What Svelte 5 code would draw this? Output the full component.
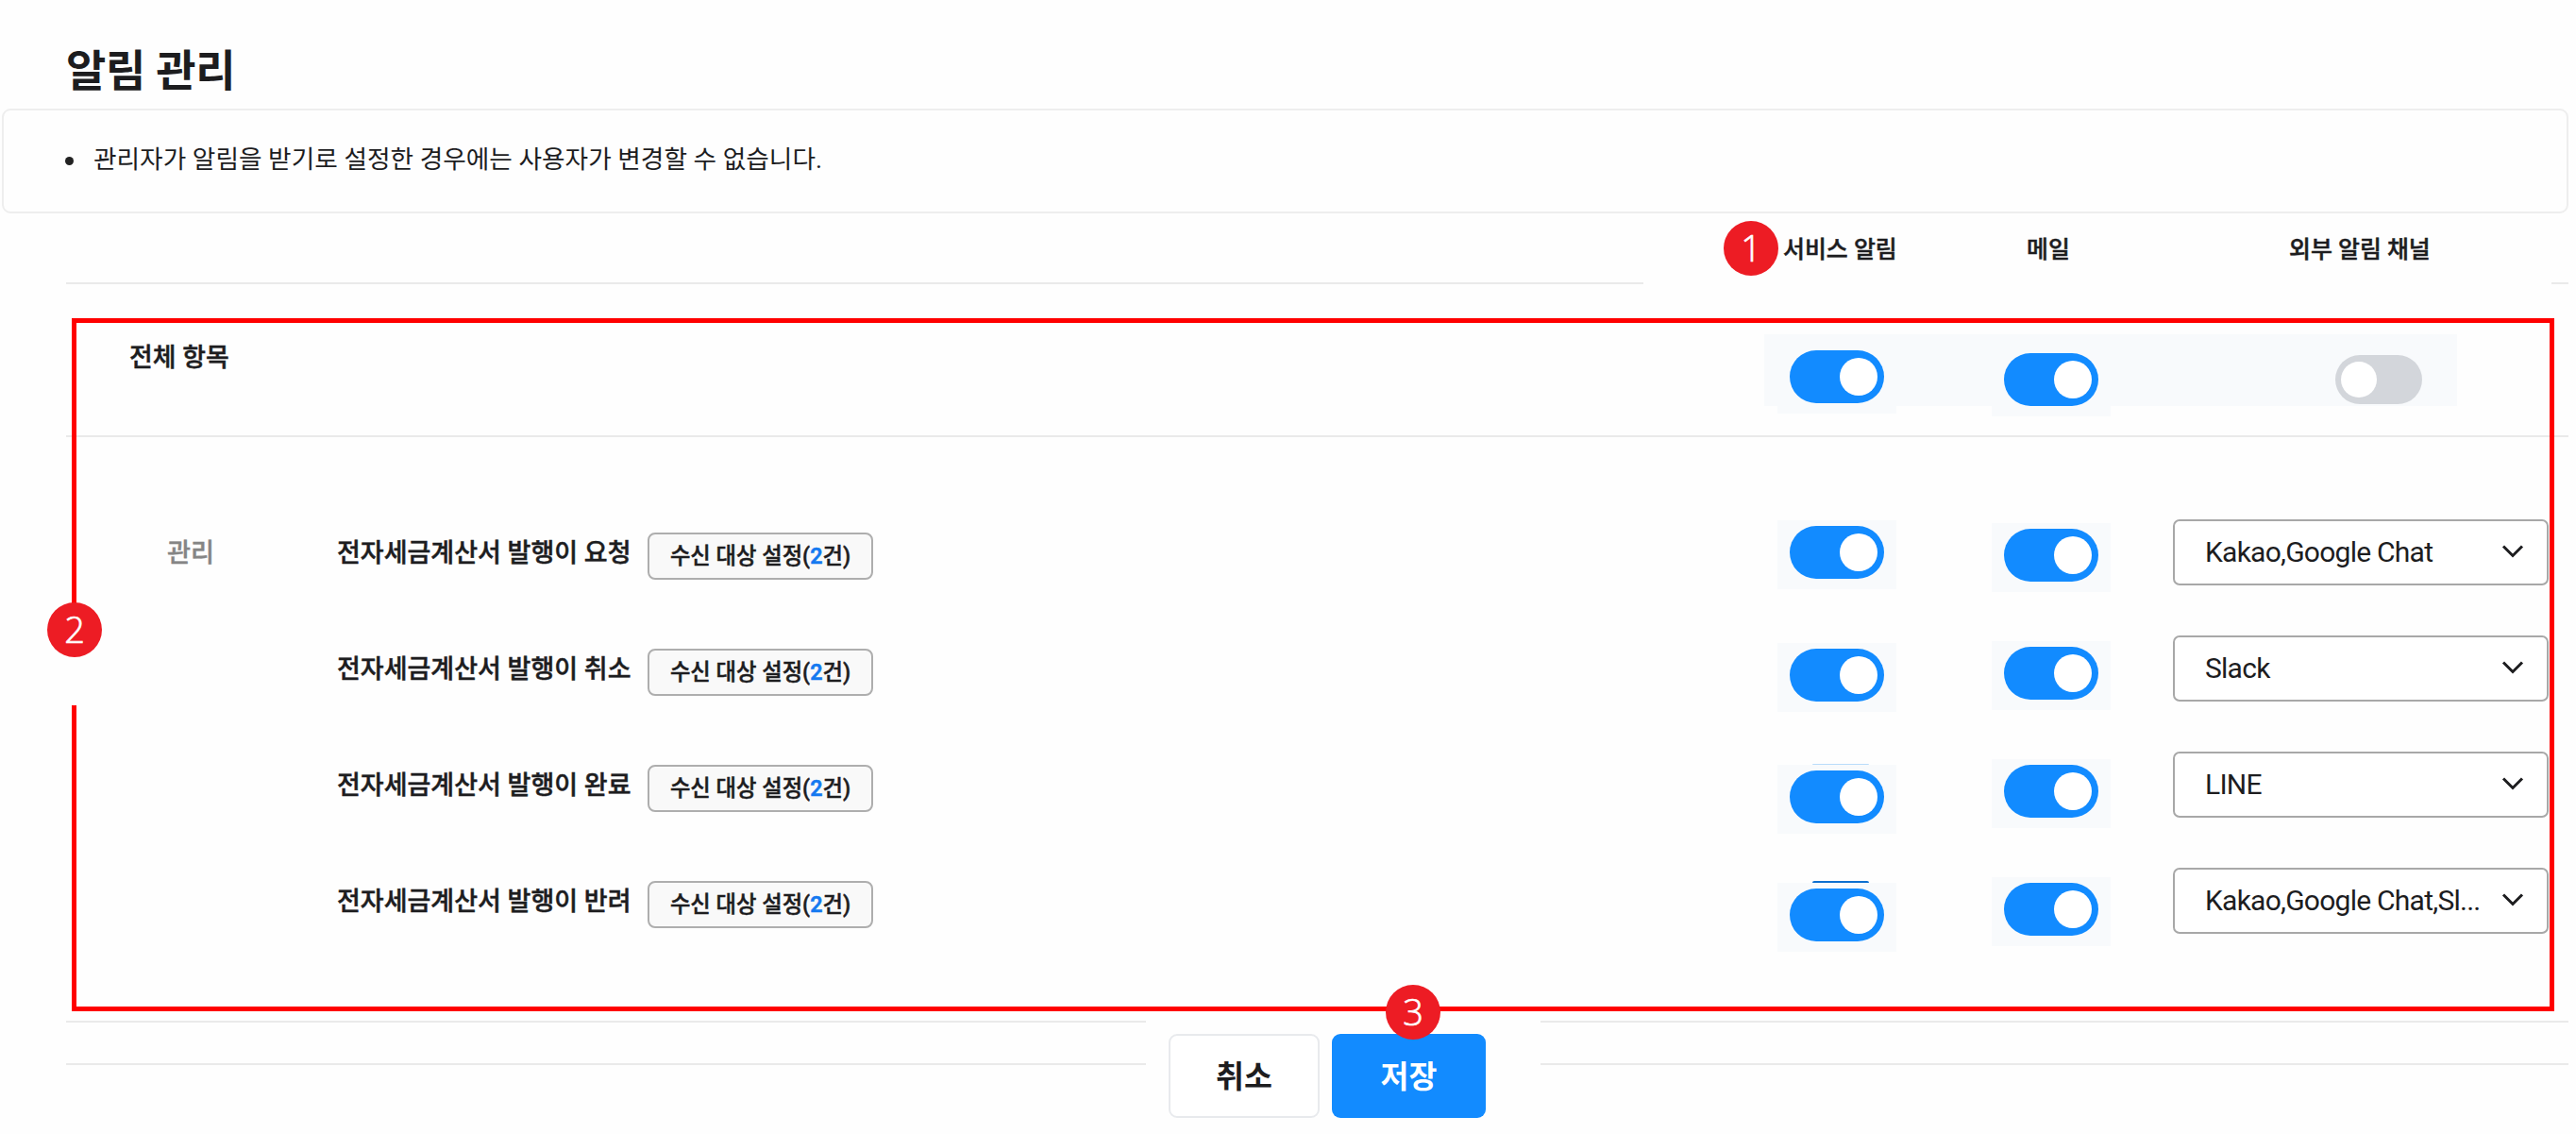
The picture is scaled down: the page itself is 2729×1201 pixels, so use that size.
<script>
  const rows = [
    { name: '전자세금계산서 발행이 요청', count: 2, channel: 'Kakao,Google Chat' },
    { name: '전자세금계산서 발행이 취소', count: 2, channel: 'Slack' },
    { name: '전자세금계산서 발행이 완료', count: 2, channel: 'LINE' },
    { name: '전자세금계산서 발행이 반려', count: 2, channel: 'Kakao,Google Chat,Sl...' }
  ];
</script>

{#snippet toggle()}
  <span class="tile"><button class="toggle" aria-label="알림 켜기"><i></i></button></span>
{/snippet}

<main>
  <h1>알림 관리</h1>
  <section class="notice"><ul><li>관리자가 알림을 받기로 설정한 경우에는 사용자가 변경할 수 없습니다.</li></ul></section>

  <header class="heads">
    <span class="h-service">서비스 알림</span>
    <span class="h-mail">메일</span>
    <span class="h-channel">외부 알림 채널</span>
  </header>
  <div class="split top"><hr /><hr /></div>

  <section class="all">
    <strong>전체 항목</strong>
    <div class="all-toggles">
      {@render toggle()}
      {@render toggle()}
      <button class="toggle off" aria-label="외부 알림 켜기"><i></i></button>
    </div>
  </section>
  <hr class="rule" />

  <section class="body">
    <div class="category">관리</div>
    <div class="items">
      {#each rows as row}
        <div class="item">
          <span class="name">{row.name}</span>
          <button class="target">수신 대상 설정(<b>{row.count}</b>건)</button>
        </div>
      {/each}
    </div>
    <div class="toggles service">
      {#each rows as _}{@render toggle()}{/each}
    </div>
    <div class="toggles mail">
      {#each rows as _}{@render toggle()}{/each}
    </div>
    <div class="selects">
      {#each rows as row}
        <div class="select">
          <span>{row.channel}</span>
          <svg viewBox="0 0 24 16" width="24" height="16"><path d="M2 2.5 12 12.5 22 2.5" /></svg>
        </div>
      {/each}
    </div>
  </section>

  <div class="split low"><hr /><hr /></div>
  <footer>
    <hr />
    <div class="actions">
      <button class="cancel">취소</button>
      <button class="save">저장</button>
    </div>
    <hr />
  </footer>

  <div class="frame"></div>
  <div class="frame-gap"></div>
  <span class="badge one">1</span>
  <span class="badge two">2</span>
  <span class="badge three">3</span>
</main>

<style>
  :global(body) { background: #fff; }
  main {
    position: relative;
    width: 2729px;
    height: 1201px;
    overflow: hidden;
    box-sizing: border-box;
    font-family: Roboto, 'Noto Sans CJK KR', sans-serif;
    color: #1d1d1f;
    background: #fefefe;
  }
  * { box-sizing: border-box; }
  button { font: inherit; color: inherit; padding: 0; border: 0; }
  hr { margin: 0; border: 0; height: 2px; background: #eaeaea; }

  h1 {
    margin: 0;
    padding: 40px 0 0 70px;
    height: 115px;
    font-size: 46px;
    line-height: 70px;
    font-weight: 700;
    letter-spacing: -0.3px;
  }
  .notice {
    width: 2719px;
    height: 111px;
    margin-left: 2px;
    padding: 33px 0 0 65px;
    border: 2px solid #eee;
    border-radius: 9px;
  }
  ul { margin: 0; padding: 0; list-style: none; }
  li {
    display: flex;
    align-items: center;
    gap: 21px;
    font-size: 26.7px;
    line-height: 38px;
  }
  li::before { content: ''; width: 9px; height: 9px; margin-top: 2px; border-radius: 50%; background: #222; }

  .heads {
    display: flex;
    height: 73px;
    padding: 20px 0 0 1889px;
    font-size: 24.9px;
    line-height: 38px;
    font-weight: 500;
    -webkit-text-stroke: 0.5px;
  }
  .h-service { width: 258px; }
  .h-mail { width: 278px; }
  .split { display: flex; justify-content: space-between; padding: 0 8px 0 70px; }
  .top hr:first-child { width: 1671px; }
  .top hr:last-child { width: 18px; }

  .all { display: flex; height: 160px; padding: 53px 0 0 137px; }
  .all strong { width: 1732px; padding-top: 5px; font-size: 26.9px; line-height: 40px; font-weight: 500; -webkit-text-stroke: 0.5px; }
  .all-toggles { display: flex; width: 734px; height: 76px; padding-left: 14px; background: #f8fafc; }
  .all-toggles .tile { margin-top: 11px; }
  .all-toggles .tile:nth-child(2) { margin: 14px 0 0 101px; }
  .tile { flex: none; display: block; width: 126px; height: 73px; padding: 6px 0 0 13px; background: #f8fafc; }
  .toggle { display: block; width: 100px; height: 56px; padding: 7px; border-radius: 28px; background: #128bff; }
  .toggle i { display: block; width: 40px; height: 40px; margin-left: auto; border-radius: 50%; background: #fff; }
  .toggle.off { width: 92px; height: 52px; margin: 22px 0 0 238px; background: #d3d6db; padding: 6px; }
  .toggle.off i { width: 38px; height: 38px; margin-left: 0; }
  .rule { width: 2651px; margin-left: 70px; }

  .body { display: flex; height: 618px; padding-top: 87px; }
  .category { width: 357px; padding: 16px 0 0 177px; font-size: 27.2px; line-height: 40px; font-weight: 500; color: #858585; -webkit-text-stroke: 0.4px; }
  .items { display: flex; flex-direction: column; width: 1526px; }
  .item { display: flex; height: 123px; padding-top: 14px; }
  .name { width: 329px; padding-top: 1px; font-size: 27px; line-height: 42px; font-weight: 500; white-space: nowrap; -webkit-text-stroke: 0.5px; }
  .target {
    width: 239px;
    height: 50px;
    border: 2px solid #aeaeae;
    border-radius: 8px;
    background: #f9f9f9;
    font-size: 23.3px;
    line-height: 46px;
    font-weight: 500;
    -webkit-text-stroke: 0.5px;
  }
  .target b { color: #1479f0; font-weight: 600; }
  .toggles { display: flex; flex-direction: column; width: 227px; }
  .service { padding-top: 1px; }
  .service .tile:nth-child(2) { margin-top: 57px; }
  .service .tile:nth-child(3) { margin-top: 56px; }
  .service .tile:nth-child(4) { margin-top: 52px; }
  .service .tile:nth-child(n + 3) { position: relative; }
  .service .tile:nth-child(n + 3)::before {
    content: '';
    position: absolute;
    left: 37px;
    top: -2px;
    width: 60px;
    height: 2px;
    border-radius: 8px 8px 0 0;
    background: #0d6fd0;
  }
  .service .tile:nth-child(3)::before { top: -1px; height: 1px; background: #b9dcfa; }
  .mail { width: 192px; padding-top: 4px; }
  .mail .tile:nth-child(n + 2) { margin-top: 52px; }
  .selects { display: flex; flex-direction: column; gap: 53px; }
  .select {
    display: flex;
    align-items: center;
    justify-content: space-between;
    width: 398px;
    height: 70px;
    padding: 0 24px 2px 32px;
    border: 2px solid #a8a8a8;
    border-radius: 7px;
    background: #fff;
    font-size: 30px;
    letter-spacing: -0.75px;
    white-space: nowrap;
  }
  path { fill: none; stroke: #1d1d1f; stroke-width: 3; }

  .low hr:first-child { width: 1144px; }
  .low hr:last-child { width: 1089px; }
  footer { display: flex; padding: 12px 8px 0 70px; }
  footer > hr { width: 1144px; margin-top: 31px; }
  footer > hr:last-child { width: 1089px; }
  .actions { display: flex; gap: 13px; width: 418px; padding-left: 24px; }
  .actions button { height: 89px; padding-bottom: 4px; border-radius: 9px; font-size: 32.5px; font-weight: 700; }
  .cancel { width: 160px; border: 2px solid #e8eaed; background: #fff; }
  .save { width: 163px; color: #fff; background: #128bff; }

  .frame { position: absolute; left: 76px; top: 337px; width: 2630px; height: 734px; border: 5px solid #f00; pointer-events: none; }
  .frame-gap { position: absolute; left: 74px; top: 690px; width: 9px; height: 57px; background: #fefefe; }
  .badge {
    position: absolute;
    width: 58px;
    height: 58px;
    border-radius: 50%;
    background: #ed1c24;
    color: #fff;
    font: 300 38px/56px 'Open Sans', sans-serif;
    -webkit-text-stroke: 0.7px;
    text-align: center;
  }
  .one { left: 1826px; top: 234px; }
  .two { left: 50px; top: 638px; }
  .three { left: 1468px; top: 1043px; }
</style>
